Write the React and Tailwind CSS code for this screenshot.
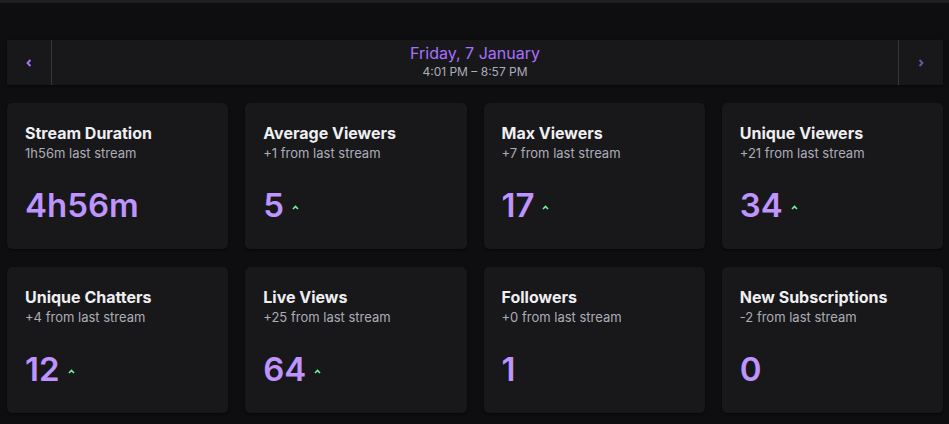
const STATS = [
  { title: "Stream Duration", sub: "1h56m last stream", value: "4h56m", up: false },
  { title: "Average Viewers", sub: "+1 from last stream", value: "5", up: true },
  { title: "Max Viewers", sub: "+7 from last stream", value: "17", up: true },
  { title: "Unique Viewers", sub: "+21 from last stream", value: "34", up: true },
  { title: "Unique Chatters", sub: "+4 from last stream", value: "12", up: true },
  { title: "Live Views", sub: "+25 from last stream", value: "64", up: true },
  { title: "Followers", sub: "+0 from last stream", value: "1", up: false },
  { title: "New Subscriptions", sub: "-2 from last stream", value: "0", up: false },
];

export default function App() {
  return (
    <div className="min-h-screen bg-[#0e0e10] font-['Inter','Liberation_Sans',sans-serif]">
      <div className="h-[3px] bg-[#1f1f23]" />
      <div className="pl-[7px] pr-[6px] pt-[37px]">
        <nav className="flex h-[45px] bg-[#18181b] shadow-[0_1px_2px_rgba(0,0,0,0.6)]">
          <button className="flex w-[45px] items-center justify-center border-r border-[#35353a] text-[#a970ff]">
            <Chevron dir="left" />
          </button>
          <div className="flex flex-1 flex-col items-center justify-center pb-[3px]">
            <span className="text-[16px] leading-[20px] text-[#a970ff]">Friday, 7 January</span>
            <span className="mt-[1px] text-[12px] leading-[16px] text-[#adadb8]">4:01 PM – 8:57 PM</span>
          </div>
          <button className="flex w-[45px] items-center justify-center border-l border-[#35353a] text-[#6f52a3]">
            <Chevron dir="right" />
          </button>
        </nav>

        <div className="mt-[18px] grid grid-cols-4 gap-x-[17px] gap-y-[18px]">
          {STATS.map((s) => (
            <div
              key={s.title}
              className="h-[146px] rounded-[5px] bg-[#18181b] px-[18px] pt-[20px] shadow-[0_1px_2px_rgba(0,0,0,0.6)]"
            >
              <div className="text-[16px] font-bold leading-[20px] text-[#efeff1]">{s.title}</div>
              <div className="mt-[1px] text-[13px] leading-[18px] text-[#adadb8]">{s.sub}</div>
              <div className="mt-[23px] flex items-center gap-[8px]">
                <span className="text-[33px] font-semibold leading-[40px] text-[#bf94ff]">{s.value}</span>
                {s.up && (
                  <svg width="7" height="5" viewBox="0 0 7 5" className="mt-[5px] text-[#6ef59a]" fill="none" stroke="currentColor" strokeWidth="1.6">
                    <path d="M1 4L3.5 1.5L6 4" />
                  </svg>
                )}
              </div>
            </div>
          ))}
        </div>
      </div>
    </div>
  );
}

function Chevron({ dir }) {
  return (
    <svg width="6" height="8" viewBox="0 0 6 8" fill="none" stroke="currentColor" strokeWidth="2" strokeLinejoin="round">
      {dir === "left" ? <path d="M4.5 1L1.5 4L4.5 7" /> : <path d="M1.5 1L4.5 4L1.5 7" />}
    </svg>
  );
}
